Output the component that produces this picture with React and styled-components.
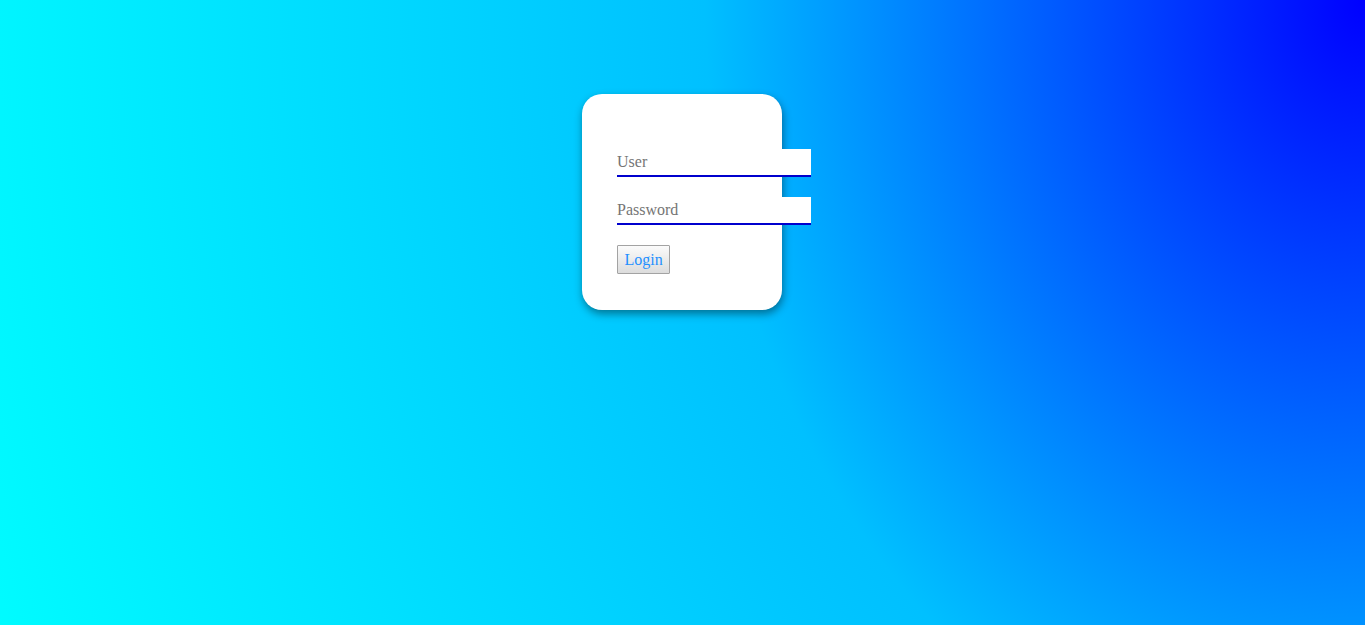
import React from "react";
import styled, { createGlobalStyle } from "styled-components";

const GlobalStyle = createGlobalStyle`
  html, body {
    margin: 0;
    padding: 0;
  }
  body {
    font-family: "Liberation Serif", "Times New Roman", serif;
  }
`;

const Page = styled.div`
  min-height: 100vh;
  box-sizing: border-box;
  padding: 94px 1px 0 0;
  display: flex;
  justify-content: center;
  align-items: flex-start;
  background: radial-gradient(
    ellipse 1500px 1875px at 100% 0%,
    #0000ff 0%,
    #00c0ff 44%,
    #00ffff 100%
  );
`;

const Card = styled.form`
  width: 200px;
  box-sizing: border-box;
  padding: 55px 35px 36px;
  background: #ffffff;
  border-radius: 20px;
  box-shadow: 1px 4px 8px rgba(0, 0, 0, 0.42);
  display: flex;
  flex-direction: column;
  align-items: flex-start;
  gap: 20px;
`;

const Field = styled.input`
  flex: none;
  width: 194px;
  height: 28px;
  box-sizing: border-box;
  margin: 0;
  padding: 0;
  border: none;
  border-bottom: 2px solid #0000cd;
  background: #ffffff;
  font-family: "Liberation Serif", "Times New Roman", serif;
  font-size: 16px;
  color: #222;
  outline: none;

  &::placeholder {
    color: #757575;
  }
`;

const Button = styled.button`
  height: 29px;
  box-sizing: border-box;
  margin: 0;
  padding: 0 6.5px;
  border: 1px solid #a3a3a3;
  border-radius: 1px;
  background: linear-gradient(#fbfbfb, #dcdcdc);
  font-family: "Liberation Serif", "Times New Roman", serif;
  font-size: 16px;
  line-height: 27px;
  color: #1e90ff;
  cursor: pointer;
`;

export default function App() {
  return (
    <>
      <GlobalStyle />
      <Page>
        <Card onSubmit={(e) => e.preventDefault()}>
          <Field type="text" placeholder="User" />
          <Field type="password" placeholder="Password" />
          <Button type="submit">Login</Button>
        </Card>
      </Page>
    </>
  );
}
